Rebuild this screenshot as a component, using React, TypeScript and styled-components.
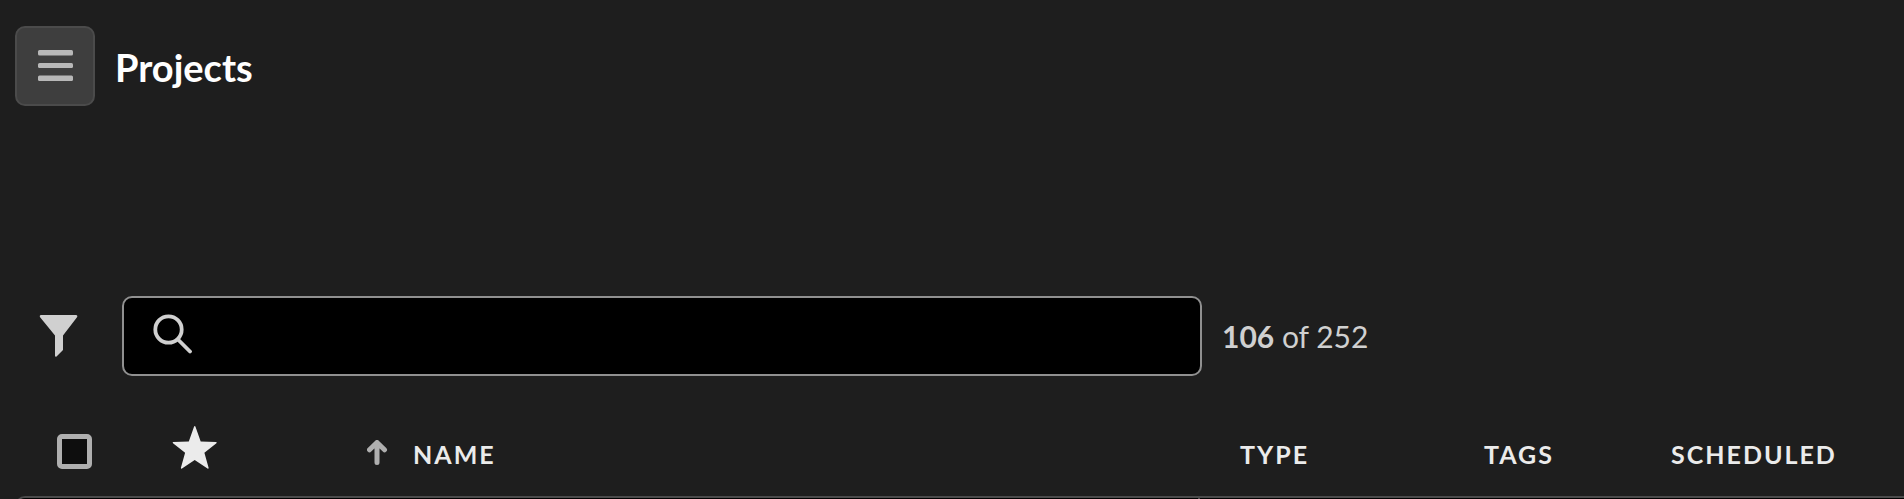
import React from "react";
import styled, { createGlobalStyle } from "styled-components";

const GlobalStyle = createGlobalStyle`
  * { box-sizing: border-box; }
  html, body { margin: 0; background: #1e1e1e; }
  body { font-family: Lato, "Open Sans", sans-serif; color: #ebebeb; }
`;

const Page = styled.main`
  height: 100vh;
  overflow: hidden;
  padding: 26px 0 0 15px;
`;

const Header = styled.header`
  display: flex;
  align-items: center;
  gap: 20px;
`;

const MenuButton = styled.button`
  display: flex;
  align-items: center;
  justify-content: center;
  width: 80px;
  height: 80px;
  padding: 0;
  border: 2px solid #4b4b4b;
  border-radius: 10px;
  background: #3e3e3e;
`;

const Title = styled.h1`
  margin: 0;
  padding-top: 2px;
  font-size: 38px;
  line-height: 44px;
  font-weight: 700;
  color: #ffffff;
`;

const Toolbar = styled.div`
  display: flex;
  align-items: center;
  margin-top: 190px;
`;

const FilterButton = styled.button`
  display: flex;
  flex: none;
  padding: 0 0 0 24px;
  width: 107px;
  border: 0;
  background: none;
`;

const SearchBox = styled.label`
  display: flex;
  align-items: center;
  flex: 0 1 1080px;
  height: 80px;
  padding: 0 28px 4px;
  border: 2px solid #909090;
  border-radius: 10px;
  background: #000000;
`;

const SearchInput = styled.input`
  flex: 1;
  min-width: 0;
  margin-left: 16px;
  border: 0;
  outline: 0;
  background: transparent;
  color: #ebebeb;
  font: inherit;
  font-size: 30px;
`;

const Count = styled.p`
  margin: 0 0 0 20px;
  font-size: 30px;
  line-height: 40px;
  white-space: nowrap;
  color: #d0d0d0;
`;

const Table = styled.table`
  width: 100%;
  table-layout: fixed;
  border-collapse: separate;
  border-spacing: 0;
  margin-top: 40px;
`;

const Column = styled.col<{ $width?: number }>`
  width: ${(p) => (p.$width ? `${p.$width}px` : "auto")};
`;

const HeadCell = styled.th<{ $inset: number }>`
  height: 80px;
  padding: 0 0 6px ${(p) => p.$inset}px;
  text-align: left;
  vertical-align: middle;
  font-size: 25px;
  line-height: 32px;
  font-weight: 700;
  letter-spacing: 2px;
  text-transform: uppercase;
`;

const CellContent = styled.div<{ $raised?: boolean }>`
  display: flex;
  align-items: center;
  padding-bottom: ${(p) => (p.$raised ? 10 : 4)}px;
`;

const Label = styled.span`
  display: block;
  padding-top: 2px;
`;

const SortButton = styled.button`
  display: flex;
  align-items: center;
  gap: 24px;
  padding: 0;
  border: 0;
  background: none;
  color: inherit;
  font: inherit;
  letter-spacing: inherit;
  text-transform: inherit;
`;

const Checkbox = styled.input`
  appearance: none;
  display: block;
  width: 35px;
  height: 35px;
  margin: 0;
  border: 5px solid #afafaf;
  border-radius: 5px;
  background: #0e0e0e;
`;

const BodyCell = styled.td<{ $divided?: boolean }>`
  height: 96px;
  border-top: 2px solid #4b4b4b;
  border-right: ${(p) => (p.$divided ? "2px solid #4b4b4b" : "0")};
  background: #000000;

  &:first-child {
    border-left: 2px solid #4b4b4b;
    border-top-left-radius: 10px;
  }
`;

const MenuIcon = () => (
  <svg width="36" height="32" viewBox="0 0 36 32" fill="#b8b8b8" aria-hidden="true">
    <rect x="1" y="0" width="35" height="5.500" rx="1.500" />
    <rect x="1" y="13" width="35" height="5" rx="1.500" />
    <rect x="1" y="25.500" width="35" height="5.500" rx="1.500" />
  </svg>
);

const FilterIcon = () => (
  <svg width="40" height="42" viewBox="0 0 40 42" fill="#d0d0d0" aria-hidden="true">
    <path d="M2 0h35c1.200 0 1.800 1.200 1 2.200L24 20.500V35l-6.500 6.500c-.5.500-1.500.2-1.500-.6V20.500L1.100 2.200C.4 1.200.8 0 2 0z" />
  </svg>
);

const SearchIcon = () => (
  <svg width="40" height="40" viewBox="0 0 40 40" fill="none" stroke="#d0d0d0" aria-hidden="true">
    <circle cx="16.500" cy="15.500" r="13.200" strokeWidth="3.800" />
    <path d="M26 25.500l12 12" strokeWidth="3.800" strokeLinecap="round" />
  </svg>
);

const StarIcon = () => (
  <svg width="46" height="44" viewBox="0 0 46 44" fill="#ebebeb" aria-label="Favorites" role="img">
    <path d="M22.100.6c.3-.8 1-.8 1.300 0l5.300 14.800 15.300.5c.8 0 1 .8.4 1.300L32.400 26.700l4.200 15c.2.800-.4 1.300-1.100.8L22.700 34 10 42.500c-.7.500-1.300 0-1.100-.8l4.200-15L1 17.200c-.6-.5-.4-1.300.4-1.300l15.400-.5z" />
  </svg>
);

const ArrowIcon = () => (
  <svg width="22" height="26" viewBox="0 0 22 26" fill="none" stroke="#afafaf" strokeWidth="5" strokeLinecap="round" strokeLinejoin="round" aria-hidden="true">
    <path d="M10 2.500v20M2.500 9.800L10 2.500l7.500 7.300" />
  </svg>
);

export default function App() {
  return (
    <>
      <GlobalStyle />
      <Page>
        <Header>
          <MenuButton type="button" aria-label="Open menu">
            <MenuIcon />
          </MenuButton>
          <Title>Projects</Title>
        </Header>

        <Toolbar>
          <FilterButton type="button" aria-label="Filter">
            <FilterIcon />
          </FilterButton>
          <SearchBox>
            <SearchIcon />
            <SearchInput type="text" aria-label="Search" />
          </SearchBox>
          <Count>
            <strong>106</strong> of 252
          </Count>
        </Toolbar>

        <Table>
          <colgroup>
            <Column $width={117} />
            <Column $width={195} />
            <Column />
            <Column $width={244} />
            <Column $width={187} />
            <Column $width={273} />
          </colgroup>
          <thead>
            <tr>
              <HeadCell scope="col" $inset={42}>
                <CellContent>
                  <Checkbox type="checkbox" aria-label="Select all" />
                </CellContent>
              </HeadCell>
              <HeadCell scope="col" $inset={40}>
                <CellContent $raised>
                  <StarIcon />
                </CellContent>
              </HeadCell>
              <HeadCell scope="col" $inset={40} aria-sort="ascending">
                <SortButton type="button">
                  <ArrowIcon />
                  <Label>Name</Label>
                </SortButton>
              </HeadCell>
              <HeadCell scope="col" $inset={40}>
                <Label>Type</Label>
              </HeadCell>
              <HeadCell scope="col" $inset={40}>
                <Label>Tags</Label>
              </HeadCell>
              <HeadCell scope="col" $inset={40}>
                <Label>Scheduled</Label>
              </HeadCell>
            </tr>
          </thead>
          <tbody>
            <tr>
              <BodyCell />
              <BodyCell />
              <BodyCell $divided />
              <BodyCell />
              <BodyCell />
              <BodyCell />
            </tr>
          </tbody>
        </Table>
      </Page>
    </>
  );
}
